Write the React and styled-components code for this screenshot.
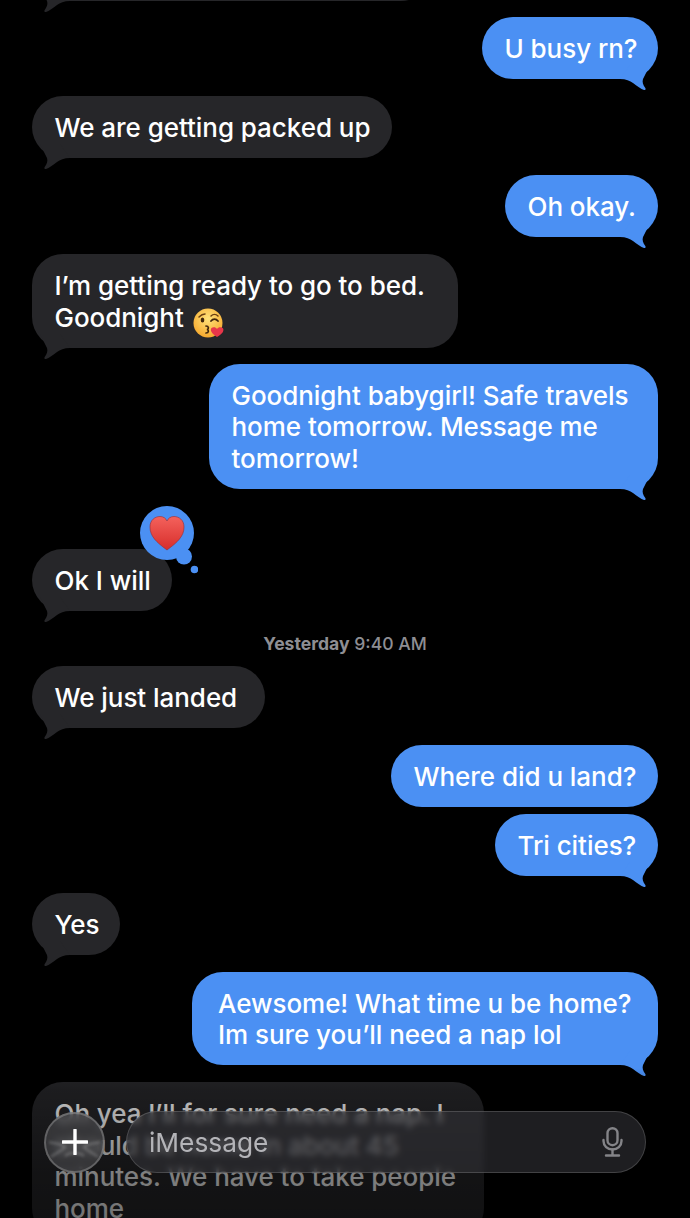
import React from "react";
import styled, { createGlobalStyle } from "styled-components";

const Global = createGlobalStyle`
  html, body { margin: 0; padding: 0; background: #000; }
  #root { width: 690px; height: 1218px; }
`;

const BLUE = "#4b90f3";
const GREY = "#262629";

const Screen = styled.div`
  position: relative;
  width: 690px;
  height: 1218px;
  overflow: hidden;
  background: #000;
  font-family: Inter, "Noto Sans", sans-serif;
  -webkit-font-smoothing: antialiased;
`;

const Thread = styled.div`
  display: flex;
  flex-direction: column;
  padding: 0 32px;
`;

const Row = styled.div`
  display: flex;
  justify-content: ${(p) => (p.$out ? "flex-end" : "flex-start")};
  margin-top: ${(p) => p.$gap ?? 17}px;
`;

const Bubble = styled.div`
  position: relative;
  box-sizing: border-box;
  flex: none;
  ${(p) => (p.$width ? `width: ${p.$width}px;` : "")}
  padding: 16px 22px 14.5px ${(p) => p.$inset ?? 22.5}px;
  border-radius: 31px;
  background: ${(p) => (p.$out ? BLUE : GREY)};
  color: #fff;
  font-size: 26px;
  font-weight: 450;
  line-height: 31.5px;
  letter-spacing: -0.05px;
  white-space: pre;
`;

const CutBubble = styled(Bubble)`
  width: 400px;
  height: 62px;
  margin-top: -61px;
`;

const TailSvg = styled.svg`
  position: absolute;
  bottom: -13px;
  ${(p) => (p.$out ? "right: 8px;" : "left: 8px; transform: scaleX(-1);")}
  width: 30px;
  height: 32px;
`;

const Tail = ({ out }) => (
  <TailSvg $out={out} viewBox="0 0 30 32">
    <path
      d="M0 19 C6 19 10 21 13 23 C17 26 21 29 24 30 C25.5 30.5 26 29 25.3 28 C23 25 22 22 23 19 L30 5 L10 5 Z"
      fill={out ? BLUE : GREY}
    />
  </TailSvg>
);

const Stamp = styled.div`
  margin-top: 22px;
  margin-bottom: -6px;
  text-align: center;
  color: #8e8e93;
  font-size: 17.6px;
  font-weight: 500;
  line-height: 22px;
`;

const StampDay = styled.span`
  font-weight: 700;
`;

const Tapback = styled.svg`
  position: absolute;
  top: -43px;
  right: -26px;
  width: 58px;
  height: 72px;
`;

const Emoji = styled.svg`
  display: inline-block;
  width: 32px;
  height: 32px;
  margin: -6px 0 -6px 2px;
  vertical-align: -6px;
`;

const KissFace = () => (
  <Emoji viewBox="0 0 32 32">
    <defs>
      <radialGradient id="face" cx="50%" cy="35%" r="65%">
        <stop offset="0%" stopColor="#ffe27a" />
        <stop offset="100%" stopColor="#f6a92e" />
      </radialGradient>
    </defs>
    <circle cx="15" cy="16" r="14.5" fill="url(#face)" />
    <path d="M6 10 C8 8 10 7 12 7" stroke="#6b3f12" strokeWidth="1.5" fill="none" strokeLinecap="round" />
    <ellipse cx="9.5" cy="13" rx="1.8" ry="2.6" fill="#40260c" />
    <path d="M18 9 C20 7 23 7 25 9" stroke="#6b3f12" strokeWidth="1.5" fill="none" strokeLinecap="round" />
    <path d="M18 14 C20 11.5 23 11.5 25 14" stroke="#40260c" strokeWidth="1.8" fill="none" strokeLinecap="round" />
    <path d="M13 19 C16 19 16 22 14 22.5 C16 23 16 26 13 26" stroke="#40260c" strokeWidth="1.7" fill="none" strokeLinecap="round" />
    <path d="M24 30 C18 26 17 23 18.5 21 C20 19.5 23 20 24 22 C25 20 28 19.5 29.7 21 C31.5 23 30 27 24 30 Z" fill="#e8364a" />
  </Emoji>
);

const HeartTapback = () => (
  <Tapback viewBox="0 0 58 72">
    <defs>
      <linearGradient id="heart" x1="0" y1="0" x2="0" y2="1">
        <stop offset="0%" stopColor="#f4625c" />
        <stop offset="100%" stopColor="#d72d2b" />
      </linearGradient>
    </defs>
    <circle cx="27" cy="27" r="27" fill={BLUE} />
    <circle cx="44" cy="50.5" r="8" fill={BLUE} />
    <circle cx="54.5" cy="63.5" r="3.8" fill={BLUE} />
    <path
      d="M27 44 C16 36 10 30 10 21 C10 14 15 10.5 20 10.5 C23.5 10.5 26 12.5 27 15 C28 12.5 30.5 10.5 34 10.5 C39 10.5 44 14 44 21 C44 30 38 36 27 44 Z"
      fill="url(#heart)"
      stroke="#9c2a2a"
      strokeWidth="0.6"
    />
  </Tapback>
);

const BottomScrim = styled.div`
  position: absolute;
  left: 0;
  right: 0;
  bottom: 0;
  height: 150px;
  background: linear-gradient(
    to bottom,
    rgba(0, 0, 0, 0) 0%,
    rgba(0, 0, 0, 0.25) 15%,
    rgba(0, 0, 0, 0.5) 70%,
    rgba(0, 0, 0, 0.55) 100%
  );
`;

const Composer = styled.div`
  position: absolute;
  left: 44px;
  top: 1111px;
  width: 602px;
  height: 62px;
  display: flex;
  align-items: center;
  gap: 22px;
`;

const PlusButton = styled.div`
  position: relative;
  flex: none;
  width: 61px;
  height: 61px;
  margin-right: -1px;
  border-radius: 50%;
  display: flex;
  align-items: center;
  justify-content: center;
  box-sizing: border-box;
  overflow: hidden;
  background: rgba(72, 72, 76, 0.62);
  border: 2px solid rgba(255, 255, 255, 0.22);
  backdrop-filter: blur(4px);
`;

const LensSmear = styled.svg`
  position: absolute;
  inset: 0;
  width: 100%;
  height: 100%;
  filter: blur(1.5px);
`;

const InputPill = styled.div`
  flex: 1;
  height: 62px;
  box-sizing: border-box;
  border-radius: 31px;
  display: flex;
  align-items: center;
  justify-content: space-between;
  padding: 0 22px 0 22px;
  background: rgba(52, 52, 56, 0.58);
  border: 1px solid rgba(255, 255, 255, 0.16);
  backdrop-filter: blur(3px);
`;

const Placeholder = styled.span`
  color: #b4b4b8;
  font-size: 26.3px;
`;

const PlusIcon = styled.svg`
  position: relative;
  width: 26px;
  height: 26px;
`;

const MicIcon = () => (
  <svg width="21" height="30" viewBox="0 0 21 30" fill="none" stroke="#848488">
    <rect x="5.5" y="1.2" width="10" height="17" rx="5" strokeWidth="2.4" />
    <path d="M1.5 13 V14 C1.5 19 5.5 22.5 10.5 22.5 C15.5 22.5 19.5 19 19.5 14 V13" strokeWidth="2.4" strokeLinecap="round" />
    <path d="M10.5 22.5 V28 M4 28.5 H17" strokeWidth="2.4" strokeLinecap="round" />
  </svg>
);

const msgs = [
  { out: true, gap: 16, text: "U busy rn?", width: 176 },
  { text: "We are getting packed up", width: 360 },
  { out: true, text: "Oh okay.", width: 153 },
  { text: "I’m getting ready to go to bed.\nGoodnight ", kiss: true, width: 426 },
  { out: true, gap: 16, text: "Goodnight babygirl! Safe travels\nhome tomorrow. Message me\ntomorrow!", width: 449 },
  { gap: 60, text: "Ok I will", heart: true, width: 140 },
  { stamp: true },
  { text: "We just landed", width: 233 },
  { out: true, text: "Where did u land?", noTail: true, width: 267 },
  { out: true, gap: 7, text: "Tri cities?", width: 163 },
  { text: "Yes", width: 88 },
  { out: true, text: "Aewsome! What time u be home?\nIm sure you’ll need a nap lol", width: 466, inset: 26 },
  { gap: 17, text: "Oh yea I’ll for sure need a nap. I\nshould be home in about 45\nminutes. We have to take people\nhome", width: 452 },
];

export default function App() {
  return (
    <Screen>
      <Global />
      <Thread>
        <Row $gap={0}>
          <CutBubble>
            <Tail />
          </CutBubble>
        </Row>
        {msgs.map((m, i) =>
          m.stamp ? (
            <Stamp key={i}>
              <StampDay>Yesterday</StampDay> 9:40 AM
            </Stamp>
          ) : (
            <Row key={i} $out={m.out} $gap={m.gap}>
              <Bubble $out={m.out} $width={m.width} $inset={m.inset}>
                {m.text}
                {m.kiss && <KissFace />}
                {!m.noTail && <Tail out={m.out} />}
                {m.heart && <HeartTapback />}
              </Bubble>
            </Row>
          )
        )}
      </Thread>
      <BottomScrim />
      <Composer>
        <PlusButton>
          <LensSmear viewBox="0 0 57 57" fill="none" stroke="#d8d8d8" strokeOpacity="0.3" strokeWidth="2">
            <path d="M3 28 C10 30 14 29 19 33 C15 38 9 39 5 43" />
            <path d="M54 28 C47 30 43 29 38 33 C42 38 48 39 52 43" />
            <path d="M19 42 C24 38 33 38 38 42" />
          </LensSmear>
          <PlusIcon viewBox="0 0 26 26">
            <path d="M13 1 V25 M1 13 H25" stroke="#fff" strokeWidth="3.4" strokeLinecap="round" />
          </PlusIcon>
        </PlusButton>
        <InputPill>
          <Placeholder>iMessage</Placeholder>
          <MicIcon />
        </InputPill>
      </Composer>
    </Screen>
  );
}
